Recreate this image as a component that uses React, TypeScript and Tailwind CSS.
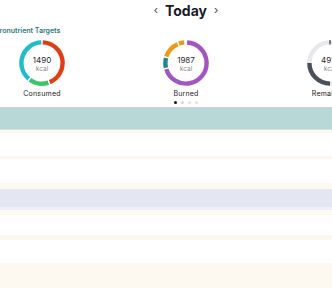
import React from "react";

function arc(cx: number, cy: number, r: number, a0: number, a1: number) {
  const rad = (a: number) => ((a - 90) * Math.PI) / 180;
  const x0 = cx + r * Math.cos(rad(a0));
  const y0 = cy + r * Math.sin(rad(a0));
  const x1 = cx + r * Math.cos(rad(a1));
  const y1 = cy + r * Math.sin(rad(a1));
  const large = a1 - a0 > 180 ? 1 : 0;
  return `M ${x0} ${y0} A ${r} ${r} 0 ${large} 1 ${x1} ${y1}`;
}

type Seg = { a0: number; a1: number; color: string };

function Ring({ segs, bg, value, label }: { segs: Seg[]; bg?: string; value: string; label: string }) {
  return (
    <div className="w-[144px] shrink-0 flex flex-col items-center">
      <div className="relative w-[46px] h-[46px]">
        <svg width="46" height="46" viewBox="0 0 46 46" className="absolute inset-0">
          {bg && <circle cx="23" cy="23" r="20.6" fill="none" stroke={bg} strokeWidth="4.4" />}
          {segs.map((s, i) => (
            <path key={i} d={arc(23, 23, 20.6, s.a0, s.a1)} fill="none" stroke={s.color} strokeWidth="4.4" />
          ))}
        </svg>
        <div className="absolute inset-0 flex flex-col items-center justify-center pt-[2px]">
          <span className="text-[8px] leading-[10px] text-[#2a2a2a]">{value}</span>
          <span className="text-[6.5px] leading-[9px] text-[#8a8a8a]">kcal</span>
        </div>
      </div>
      <div className="mt-[3px] text-[7px] leading-[9px] text-[#222] tracking-[0.2px]">{label}</div>
    </div>
  );
}

export default function App() {
  return (
    <div className="w-[332px] h-[288px] overflow-hidden bg-white" style={{ fontFamily: "Inter, 'Noto Sans', sans-serif" }}>
      <div className="h-[21px] flex items-center justify-center gap-[7px] pl-[40px]">
        <span className="text-[11px] text-[#444] leading-none">‹</span>
        <span className="text-[14px] font-bold text-[#1b1b2b] leading-none">Today</span>
        <span className="text-[11px] text-[#444] leading-none">›</span>
      </div>
      <div className="h-[13px] flex items-end">
        <span className="-ml-[15px] text-[7px] font-semibold text-[#2a7b80] leading-none whitespace-nowrap">Macronutrient Targets</span>
      </div>
      <div className="flex -ml-[30px] pt-[6px]">
        <Ring
          value="1490"
          label="Consumed"
          segs={[
            { a0: 2, a1: 158, color: "#e03c16" },
            { a0: 162, a1: 216, color: "#3ec46c" },
            { a0: 220, a1: 358, color: "#20bccd" },
          ]}
        />
        <Ring
          value="1987"
          label="Burned"
          segs={[
            { a0: 3, a1: 253, color: "#a355c2" },
            { a0: 257, a1: 284, color: "#22878a" },
            { a0: 288, a1: 336, color: "#ec9a18" },
            { a0: 340, a1: 355, color: "#ec9a18" },
          ]}
        />
        <Ring
          value="4917"
          label="Remaining"
          bg="#e6e8ec"
          segs={[
            { a0: 180, a1: 270, color: "#4b4f5c" },
            { a0: 358, a1: 2, color: "#4b4f5c" },
          ]}
        />
      </div>
      <div className="h-[9px] flex items-center justify-center gap-[4px] pl-[39px]">
        <span className="w-[3px] h-[3px] rounded-full bg-[#111]" />
        <span className="w-[3px] h-[3px] rounded-full bg-[#d8d8d8]" />
        <span className="w-[3px] h-[3px] rounded-full bg-[#e2e2e2]" />
        <span className="w-[3px] h-[3px] rounded-full bg-[#e2e2e2]" />
      </div>
      <div className="flex flex-col">
        <div className="h-[1px] bg-[#cdd6d5]" />
        <div className="h-[21px] bg-[#b8d8d8]" />
        <div className="h-[1px] bg-[#cfe4e2]" />
        <div className="h-[3px] bg-[#fdfaee]" />
        <div className="h-[23px] bg-white" />
        <div className="h-[3px] bg-[#fbf6ee]" />
        <div className="h-[24px] bg-white" />
        <div className="h-[6px] bg-[#fdf9ef]" />
        <div className="h-[18px] bg-[#e4e6f1]" />
        <div className="h-[3px] bg-[#eeeff6]" />
        <div className="h-[5px] bg-[#fdfaf1]" />
        <div className="h-[20px] bg-white" />
        <div className="h-[5px] bg-[#fbf8f0]" />
        <div className="h-[23px] bg-white" />
        <div className="h-[30px] bg-[#fdf9f1]" />
      </div>
    </div>
  );
}
